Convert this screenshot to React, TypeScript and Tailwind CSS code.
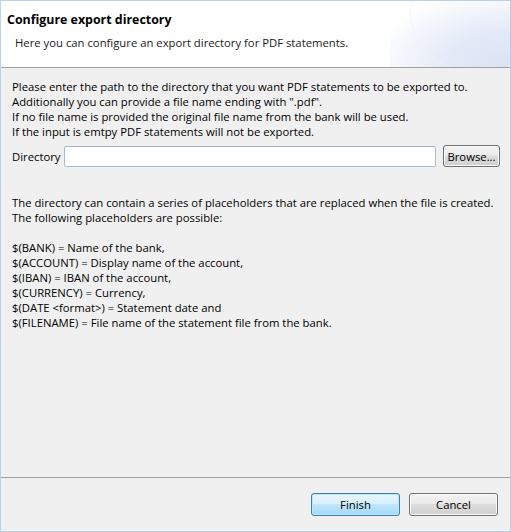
import React from "react";

const font = { fontFamily: '"Open Sans", "Noto Sans", sans-serif' };

function WinButton({ label, primary }: { label: string; primary?: boolean }) {
  return (
    <button
      style={font}
      className={
        "relative w-[89px] h-[23px] rounded-[3px] border text-[11.3px] leading-[15px] text-black " +
        (primary
          ? "border-[#3c7fb1] bg-[linear-gradient(to_bottom,#eaf6fd_0%,#d9f0fc_45%,#bee6fd_50%,#a7d9f5_100%)] shadow-[inset_0_0_0_1px_#bfe6fb]"
          : "border-[#707070] bg-[linear-gradient(to_bottom,#f2f2f2_0%,#ebebeb_45%,#dddddd_50%,#cfcfcf_100%)] shadow-[inset_0_0_0_1px_#fcfcfc]")
      }
    >
      {label}
    </button>
  );
}

export default function App() {
  return (
    <div
      style={font}
      className="w-[511px] h-[532px] border border-[#b9d1ea] bg-[#f0f0f0] flex flex-col text-[11.3px] leading-[15px] text-black overflow-hidden"
    >
      <div className="relative h-[66px] bg-white pl-[6px] pt-[11px] overflow-hidden">
        <div className="absolute right-0 top-0 w-[120px] h-full bg-[radial-gradient(ellipse_140px_80px_at_100%_100%,#dbe3f4_0%,#e3e9f7_45%,#f2f5fb_75%,rgba(255,255,255,0)_100%)]" />
        <div className="absolute right-[-40px] top-[-50px] w-[140px] h-[120px] rounded-full border border-[#eef2fa] opacity-80" />
        <div className="relative font-bold text-[12.4px] text-black">Configure export directory</div>
        <div className="relative mt-[8px] ml-[8px] text-[#1a1a1a]">
          Here you can configure an export directory for PDF statements.
        </div>
      </div>
      <div className="h-px bg-[#a0a0a0]" />
      <div className="flex-1 flex flex-col pl-[11px] pr-[10px] pt-[11px]">
        <div>Please enter the path to the directory that you want PDF statements to be exported to.</div>
        <div>Additionally you can provide a file name ending with ".pdf".</div>
        <div>If no file name is provided the original file name from the bank will be used.</div>
        <div>If the input is emtpy PDF statements will not be exported.</div>
        <div className="mt-[6px] flex items-center h-[22px]">
          <div className="w-[52px]">Directory</div>
          <input
            className="flex-1 h-[21px] bg-white border border-[#abbdd0] border-t-[#a3b3c5] rounded-[2px] outline-none px-1"
            style={font}
          />
          <button
            className="ml-[7px] w-[57px] h-[22px] rounded-[3px] border border-[#707070] bg-[linear-gradient(to_bottom,#f2f2f2_0%,#ebebeb_45%,#dddddd_50%,#cfcfcf_100%)] shadow-[inset_0_0_0_1px_#fcfcfc] text-[11.3px] leading-[15px]"
            style={font}
          >
            Browse...
          </button>
        </div>
        <div className="mt-[28px]">
          <div>The directory can contain a series of placeholders that are replaced when the file is created.</div>
          <div>The following placeholders are possible:</div>
          <div className="h-[15px]" />
          <div>$(BANK) = Name of the bank,</div>
          <div>$(ACCOUNT) = Display name of the account,</div>
          <div>$(IBAN) = IBAN of the account,</div>
          <div>$(CURRENCY) = Currency,</div>
          <div>$(DATE &lt;format&gt;) = Statement date and</div>
          <div>$(FILENAME) = File name of the statement file from the bank.</div>
        </div>
      </div>
      <div className="h-px bg-[#a0a0a0]" />
      <div className="h-[53px] flex justify-end items-start pt-[15px] pr-[12px] gap-[9px]">
        <WinButton label="Finish" primary />
        <WinButton label="Cancel" />
      </div>
    </div>
  );
}
